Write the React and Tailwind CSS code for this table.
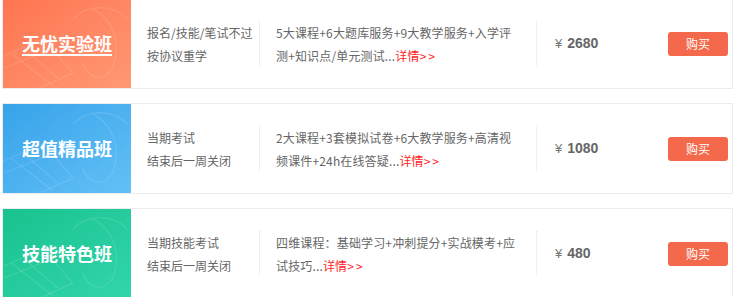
import React from "react";

const rows = [
  {
    title: "无忧实验班",
    underline: true,
    bg: "bg-gradient-to-br from-[#ff7450] to-[#ff9874]",
    l1: "报名/技能/笔试不过",
    l2: "按协议重学",
    d1: "5大课程+6大题库服务+9大教学服务+入学评",
    d2: "测+知识点/单元测试...",
    price: "2680",
  },
  {
    title: "超值精品班",
    bg: "bg-gradient-to-br from-[#36a3ea] to-[#62c0f6]",
    l1: "当期考试",
    l2: "结束后一周关闭",
    d1: "2大课程+3套模拟试卷+6大教学服务+高清视",
    d2: "频课件+24h在线答疑...",
    price: "1080",
  },
  {
    title: "技能特色班",
    bg: "bg-gradient-to-br from-[#19c28f] to-[#30d5aa]",
    l1: "当期技能考试",
    l2: "结束后一周关闭",
    d1: "四维课程：基础学习+冲刺提分+实战模考+应",
    d2: "试技巧...",
    price: "480",
  },
];

function Deco() {
  return (
    <svg className="absolute inset-0 w-full h-full" viewBox="0 0 128 90" fill="none">
      <g stroke="white" strokeOpacity="0.12" strokeWidth="1.2">
        <path d="M-5 60 L40 40 L70 75 L25 95" />
        <path d="M8 55 L50 88" />
        <path d="M20 50 L55 80" />
        <path d="M0 70 L45 52" />
        <path d="M90 10 C110 20 120 45 110 70 C100 85 85 80 80 65" />
        <path d="M70 20 C85 5 110 5 125 20" />
      </g>
    </svg>
  );
}

function Row({ r }) {
  return (
    <div className="flex h-[91px] border border-[#ececec] bg-white">
      <div
        className={`relative w-[128px] shrink-0 flex items-center justify-center overflow-hidden ${r.bg}`}
      >
        <Deco />
        <span
          className={`relative text-white text-[18px] font-bold ${r.underline ? "underline decoration-2 underline-offset-[3px]" : ""}`}
          style={{ fontFamily: '"Noto Sans CJK SC", sans-serif' }}
        >
          {r.title}
        </span>
      </div>
      <div className="w-[128px] shrink-0 pl-[16px] flex flex-col justify-center text-[12px] leading-[23px] text-[#666]">
        <div>{r.l1}</div>
        <div>{r.l2}</div>
      </div>
      <div className="self-center h-[45px] border-l border-dotted border-[#e2e2e2]" />
      <div className="w-[276px] shrink-0 pl-[16px] flex flex-col justify-center text-[12px] leading-[23px] text-[#666] whitespace-nowrap">
        <div className="tracking-[0.15px]">{r.d1}</div>
        <div className="tracking-[0.15px]">
          {r.d2}
          <span className="text-[#ff2424]">
            详情<span className="tracking-[2px]">&gt;&gt;</span>
          </span>
        </div>
      </div>
      <div className="self-center h-[45px] border-l border-dotted border-[#e2e2e2]" />
      <div className="flex-1 flex items-center justify-between pl-[18px] pr-[4px]">
        <div className="text-[#666] flex items-baseline" style={{ fontFamily: '"Liberation Sans", Arial, sans-serif' }}>
          <span className="text-[13px] mr-[5px] text-[#777]">¥</span>
          <span className="text-[14px] font-bold">{r.price}</span>
        </div>
        <button className="w-[60px] h-[24px] rounded-[3px] bg-[#f4694b] text-white text-[12px] leading-[24px]">
          购买
        </button>
      </div>
    </div>
  );
}

export default function App() {
  return (
    <div
      className="w-[734px] h-[297px] overflow-hidden bg-white"
      style={{ fontFamily: '"Noto Sans CJK SC", "Microsoft YaHei", sans-serif' }}
    >
      <div className="mt-[-2px] pl-[2px] pr-[1px] flex flex-col gap-[14px]">
        {rows.map((r) => (
          <Row key={r.title} r={r} />
        ))}
      </div>
    </div>
  );
}
